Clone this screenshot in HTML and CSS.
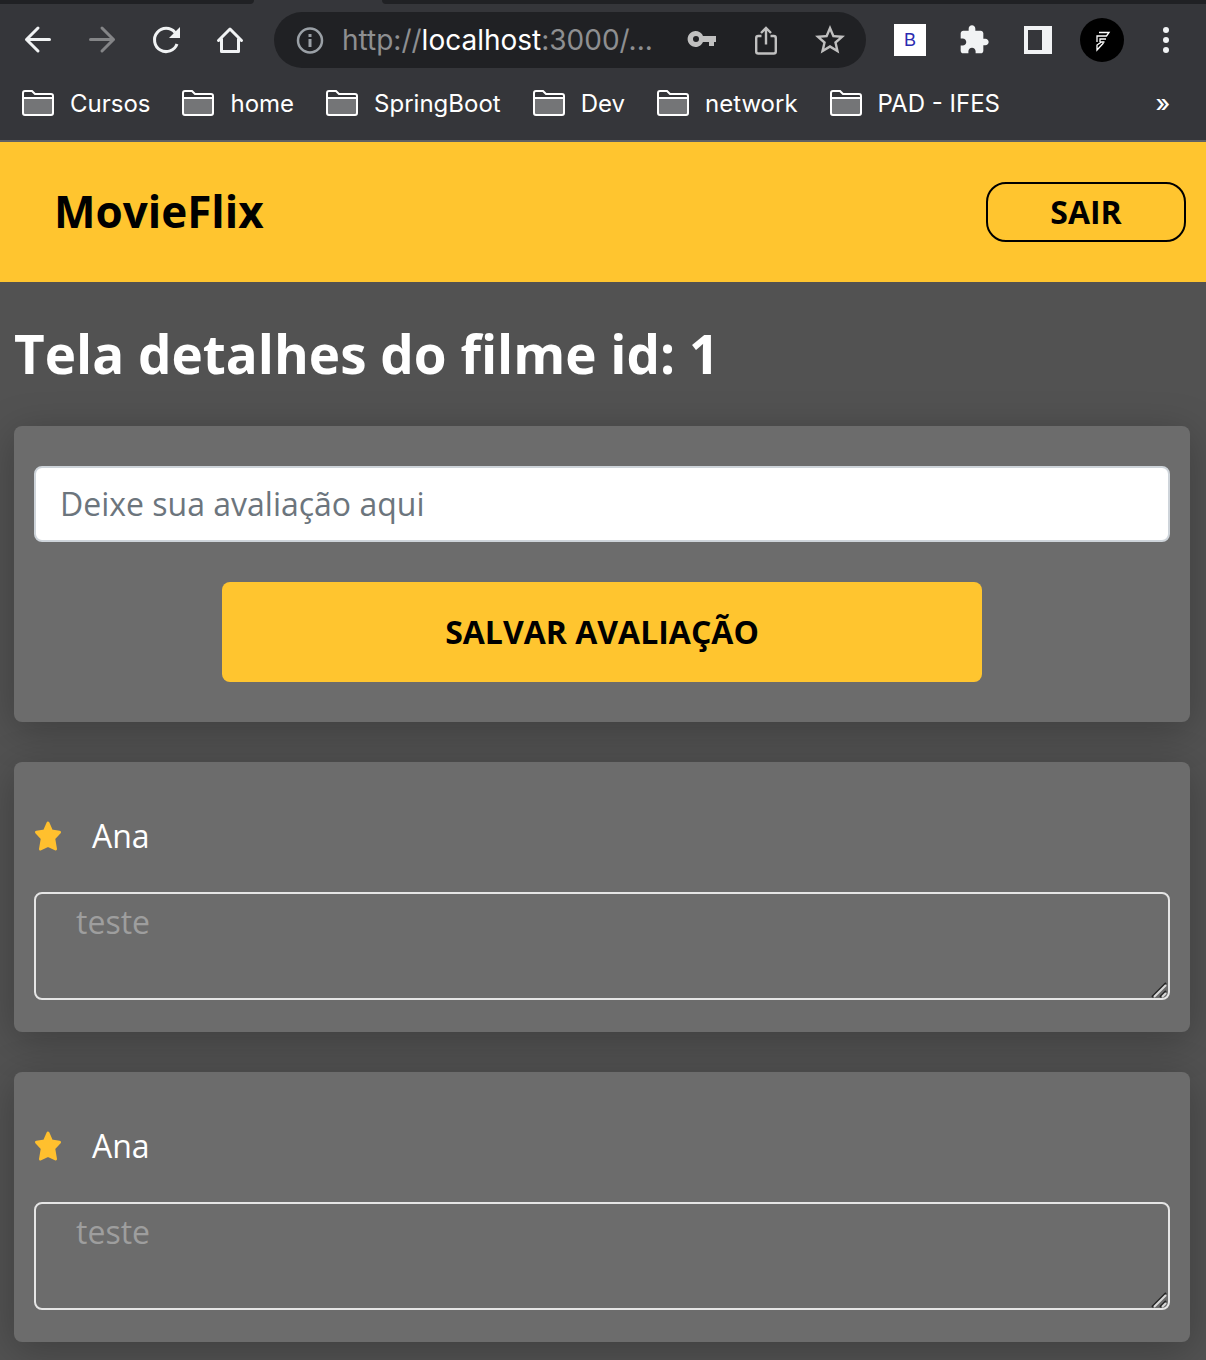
FILE: index.html
```html
<!DOCTYPE html>
<html lang="pt-BR">
<head>
<meta charset="utf-8">
<meta name="viewport" content="width=device-width, initial-scale=1">
<title>MovieFlix</title>
<link rel="stylesheet" href="styles.css">
</head>
<body>
<svg class="symbols" aria-hidden="true">
  <symbol id="folder" viewBox="0 0 32 26">
    <path d="M1 8h30v16H1z" fill="#747577"/>
    <path d="M1 23V3q0-2 2-2h7l3 3h16q2 0 2 2v17q0 2-2 2H3q-2 0-2-2zM1 8h30" fill="none" stroke="#fff" stroke-width="2"/>
  </symbol>
  <symbol id="rating-star" viewBox="0 0 28 30">
    <path d="M14 2l3.500 8 8 1.200-5.800 6.300 1.800 10.500L14 24.500 6.500 28l1.800-10.500-5.800-6.300 8-1.200z" fill="#ffc02e" stroke="#ffc02e" stroke-width="3" stroke-linejoin="round"/>
  </symbol>
  <symbol id="grip" viewBox="0 0 16 16">
    <path d="M1 15L15 1M9 15l6-6" stroke="#262626" stroke-width="2"/>
    <path d="M3 15L15 3M11 15l4-4" stroke="#d8d8d8" stroke-width="2"/>
  </symbol>
</svg>

<div class="browser">
  <div class="tabs"><span class="tab-before"></span><span class="tab-after"></span></div>
  <div class="toolbar">
    <button class="tool" aria-label="Voltar"><svg class="icon line" viewBox="0 0 32 32"><path d="M27.500 15.500H4.500M16 4L4.500 15.500 16 27"/></svg></button>
    <button class="tool tool-off" aria-label="Avançar"><svg class="icon line" viewBox="0 0 32 32"><path d="M4.500 15.500H27.500M16 4l11.500 11.500L16 27"/></svg></button>
    <button class="tool" aria-label="Recarregar"><svg class="icon" viewBox="0 0 32 32"><path d="M27 20A11.600 11.600 0 1 1 25 8.500" fill="none" stroke="currentColor" stroke-width="3"/><path d="M30 3v11H19z" fill="currentColor"/></svg></button>
    <button class="tool" aria-label="Página inicial"><svg class="icon line" viewBox="0 0 32 32"><path d="M4.500 16.500L16 5l11.500 11.500M7.500 15v12.500h17V15"/></svg></button>
    <div class="address">
      <button class="tool-small info" aria-label="Informações do site"><svg class="icon" viewBox="0 0 32 32"><circle cx="16" cy="16.500" r="12" fill="none" stroke="currentColor" stroke-width="2.500"/><path d="M14.500 10h3v3h-3zM14.500 15h3v8h-3z" fill="currentColor"/></svg></button>
      <span class="url">http://<span class="host">localhost</span>:3000/...</span>
      <span class="address-tools">
        <button class="tool-small" aria-label="Senhas"><svg class="icon" viewBox="0 0 32 32"><path fill="currentColor" fill-rule="evenodd" d="M17 12h13v6h-2v4h-5v-4h-6A8 8 0 1 1 17 12zM10 12a3 3 0 1 0 0 6 3 3 0 0 0 0-6z"/></svg></button>
        <button class="tool-small" aria-label="Compartilhar"><svg class="icon" viewBox="0 0 32 32"><path fill="none" stroke="currentColor" stroke-width="2.400" d="M11.500 12H8.200q-2 0-2 2v13.500q0 2 2 2h15.600q2 0 2-2V14q0-2-2-2h-3.300M16 20.500V4M11 9l5-5 5 5"/></svg></button>
        <button class="tool-small" aria-label="Favoritar"><svg class="icon-star" viewBox="0 0 24 24"><path fill="currentColor" d="M22 9.240l-7.190-.620L12 2 9.190 8.630 2 9.240l5.460 4.730L5.820 21 12 17.270 18.180 21l-1.630-7.030L22 9.240zM12 15.400l-3.760 2.270 1-4.280-3.320-2.880 4.380-.380L12 6.100l1.710 4.040 4.380.380-3.320 2.880 1 4.280L12 15.400z"/></svg></button>
      </span>
    </div>
    <button class="tool" aria-label="Extensão B"><span class="ext-b">B</span></button>
    <button class="tool" aria-label="Extensões"><svg class="icon" viewBox="0 0 24 24"><path fill="currentColor" d="M20.500 11H19V7c0-1.100-.9-2-2-2h-4V3.500C13 2.120 11.880 1 10.500 1S8 2.120 8 3.500V5H4c-1.100 0-1.990.9-1.990 2v3.800H3.500c1.490 0 2.700 1.210 2.700 2.700s-1.210 2.700-2.700 2.700H2V20c0 1.100.9 2 2 2h3.800v-1.500c0-1.490 1.210-2.700 2.700-2.700 1.490 0 2.700 1.210 2.700 2.700V22H17c1.100 0 2-.9 2-2v-4h1.500c1.380 0 2.500-1.120 2.500-2.500S21.880 11 20.500 11z"/></svg></button>
    <button class="tool" aria-label="Painel lateral"><svg class="icon" viewBox="0 0 32 32"><path fill="currentColor" fill-rule="evenodd" d="M2 2h28v28H2zM6 6v20h14V6z"/></svg></button>
    <button class="tool" aria-label="Perfil"><svg class="avatar" viewBox="0 0 44 44"><circle cx="22" cy="22" r="22" fill="#000"/><path d="M19 14.500H29l-2.500 3.500H17v6M26 21h-6v3M24.500 24h-3l-4.500 3v5l6.500-7" fill="none" stroke="#fff" stroke-width="1.300"/></svg></button>
    <button class="tool" aria-label="Menu"><svg class="icon" viewBox="0 0 32 32"><g fill="currentColor"><circle cx="16" cy="6" r="3"/><circle cx="16" cy="16" r="3"/><circle cx="16" cy="26" r="3"/></g></svg></button>
  </div>
  <nav class="bookmarks" aria-label="Favoritos">
    <a href="#"><svg class="folder"><use href="#folder"/></svg>Cursos</a>
    <a href="#"><svg class="folder"><use href="#folder"/></svg>home</a>
    <a href="#"><svg class="folder"><use href="#folder"/></svg>SpringBoot</a>
    <a href="#"><svg class="folder"><use href="#folder"/></svg>Dev</a>
    <a href="#"><svg class="folder"><use href="#folder"/></svg>network</a>
    <a href="#"><svg class="folder"><use href="#folder"/></svg>PAD - IFES</a>
    <button class="more" aria-label="Mais favoritos">»</button>
  </nav>
</div>

<header class="navbar">
  <a class="brand" href="#">MovieFlix</a>
  <button class="logout">SAIR</button>
</header>

<main class="details">
  <h1 class="title">Tela detalhes do filme id: 1</h1>
  <form class="card review-form">
    <input class="review-input" type="text" placeholder="Deixe sua avaliação aqui" aria-label="Avaliação">
    <button class="save" type="button">SALVAR AVALIAÇÃO</button>
  </form>
  <section class="card review">
    <label class="author" for="review-1"><svg class="rating"><use href="#rating-star"/></svg>Ana</label>
    <div class="field"><textarea class="review-text" id="review-1">teste</textarea><svg class="grip"><use href="#grip"/></svg></div>
  </section>
  <section class="card review">
    <label class="author" for="review-2"><svg class="rating"><use href="#rating-star"/></svg>Ana</label>
    <div class="field"><textarea class="review-text" id="review-2">teste</textarea><svg class="grip"><use href="#grip"/></svg></div>
  </section>
</main>
</body>
</html>
```
FILE: styles.css
```css
* {
  box-sizing: border-box;
}

body {
  margin: 0;
  background: #525252;
  color: #fff;
  font-family: "Open Sans", sans-serif;
  font-size: 32px;
}

button,
input,
textarea {
  margin: 0;
  font: inherit;
}

button {
  padding: 0;
  border: 0;
  background: none;
  color: inherit;
}

a {
  color: inherit;
  text-decoration: none;
}

svg {
  display: block;
  flex: none;
}

.symbols {
  position: absolute;
  width: 0;
  height: 0;
}

/* Browser chrome */
.browser {
  background: #35363a;
  border-bottom: 2px solid #5f6064;
  font-family: Inter, sans-serif;
}

.tabs {
  display: flex;
  gap: 128px;
  height: 4px;
}

.tab-before,
.tab-after {
  background: #202124;
}

.tab-before {
  width: 254px;
  border-bottom-right-radius: 8px;
}

.tab-after {
  flex: 1;
  border-bottom-left-radius: 8px;
}

.toolbar {
  display: flex;
  align-items: center;
  height: 72px;
  padding: 0 8px 0 6px;
  color: #f1f3f4;
}

.tool {
  display: flex;
  flex: none;
  align-items: center;
  justify-content: center;
  width: 64px;
  height: 56px;
}

.tool-off {
  color: #848587;
}

.icon {
  width: 32px;
  height: 32px;
}

.icon-star {
  width: 36px;
  height: 36px;
}

.line {
  fill: none;
  stroke: currentColor;
  stroke-width: 3;
  stroke-linecap: round;
  stroke-linejoin: round;
}

.address {
  display: flex;
  flex: 1;
  align-items: center;
  min-width: 0;
  height: 56px;
  margin: 0 12px;
  padding: 0 18px;
  border-radius: 28px;
  background: #202124;
}

.tool-small {
  display: flex;
  align-items: center;
  justify-content: center;
  width: 36px;
  height: 36px;
  color: #c0c0c0;
}

.info {
  color: #9aa0a6;
}

.url {
  flex: 1;
  padding-left: 14px;
  overflow: hidden;
  color: #8e8f91;
  font-size: 28px;
  white-space: nowrap;
}

.host {
  color: #fff;
}

.address-tools {
  display: flex;
  gap: 28px;
}

.ext-b {
  width: 32px;
  height: 32px;
  background: #fff;
  color: #2b2bb0;
  font-family: "Liberation Sans", sans-serif;
  font-size: 18px;
  line-height: 32px;
}

.avatar {
  width: 44px;
  height: 44px;
}

.bookmarks {
  display: flex;
  align-items: center;
  gap: 32px;
  height: 64px;
  padding: 0 36px 10px 22px;
  font-size: 24px;
  white-space: nowrap;
}

.bookmarks a {
  display: flex;
  align-items: center;
  gap: 16px;
}

.folder {
  width: 32px;
  height: 26px;
}

.more {
  margin-left: auto;
  font-weight: 500;
}

/* Site header */
.navbar {
  display: flex;
  align-items: center;
  justify-content: space-between;
  height: 140px;
  padding: 0 20px 0 54px;
  background: #ffc52f;
  color: #000;
  font-weight: 700;
}

.brand {
  padding-bottom: 2px;
  font-size: 44px;
}

.logout {
  width: 200px;
  height: 60px;
  border: 2px solid #000;
  border-radius: 20px;
  line-height: 56px;
}

/* Movie details */
.details {
  display: flex;
  flex-direction: column;
  gap: 40px;
  padding: 40px 16px 18px 14px;
}

.title {
  margin: 0;
  font-size: 53px;
  font-weight: 700;
  line-height: 64px;
}

.card {
  display: flex;
  flex-direction: column;
  border-radius: 8px;
  background: #6c6c6c;
  box-shadow: 0 8px 40px rgba(0, 0, 0, 0.25);
}

.review-form {
  align-items: center;
  gap: 40px;
  padding: 40px 20px;
}

.review-input {
  width: 100%;
  height: 76px;
  padding: 0 24px 2px;
  border: 2px solid #ced4da;
  border-radius: 8px;
  background: #fff;
  color: #495057;
}

.review-input::placeholder {
  color: #6c757d;
  opacity: 1;
}

.save {
  width: 760px;
  max-width: 100%;
  height: 100px;
  padding-bottom: 2px;
  border-radius: 8px;
  background: #ffc52f;
  color: #000;
  font-weight: 700;
}

.review {
  gap: 32px;
  padding: 50px 20px 32px;
}

.author {
  display: flex;
  align-items: center;
  gap: 30px;
  line-height: 48px;
}

.rating {
  width: 28px;
  height: 30px;
}

.field {
  position: relative;
}

.review-text {
  display: block;
  width: 100%;
  height: 108px;
  padding: 4px 40px;
  border: 2px solid #e5e5e5;
  border-radius: 8px;
  background: transparent;
  color: #9e9e9e;
  line-height: 48px;
  resize: none;
}

.grip {
  position: absolute;
  right: 3px;
  bottom: 2px;
  width: 16px;
  height: 16px;
}
```
